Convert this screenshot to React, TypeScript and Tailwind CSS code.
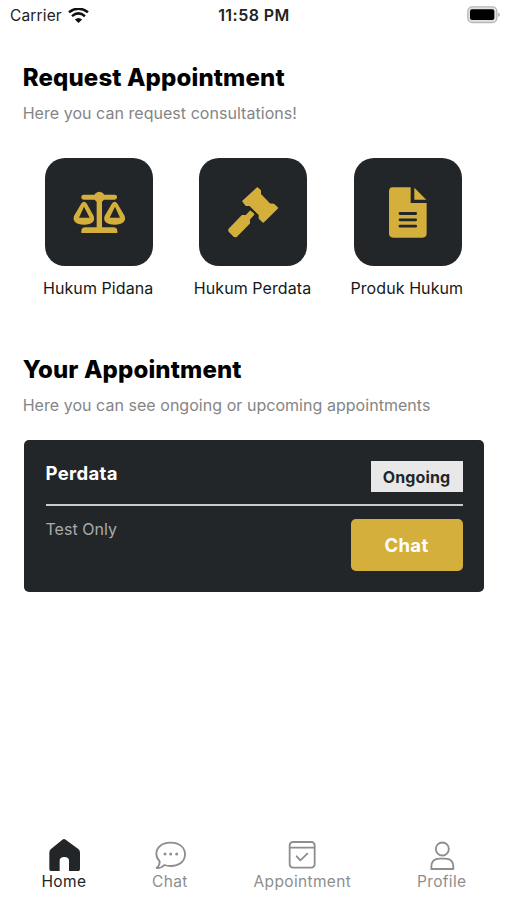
import type { ReactNode } from "react";

function WifiIcon() {
  return (
    <svg className="ml-[6px] h-[16px] w-[21px]" viewBox="204 20 63 48" fill="none" stroke="#111" strokeWidth="7.5">
      <path d="M207 33 Q235 11 264 33" />
      <path d="M216 44.5 Q235 28 255 44.5" />
      <path d="M235.500 65 L224.500 54.500 Q235.500 45.500 246.500 54.500 Z" fill="#111" stroke="none" />
    </svg>
  );
}

function BatteryIcon() {
  return (
    <svg className="h-[18px] w-[34px]" viewBox="636 16 102 54">
      <rect x="641.500" y="18.500" width="87" height="47" rx="13" fill="#e2e2e2" stroke="#b8b8b8" strokeWidth="4" />
      <rect x="648" y="26" width="73" height="32" rx="6" fill="#000" />
      <path d="M733 36 Q737 38 737 42 Q737 46 733 48 Z" fill="#999" />
    </svg>
  );
}

function ScalesIcon() {
  return (
    <svg className="size-full" viewBox="47 25 324 324" fill="#d4af3c">
      <circle cx="210" cy="142" r="16" />
      <rect x="156" y="135" width="107" height="15" rx="7" />
      <rect x="202" y="140" width="16" height="98" />
      <path d="M156 250 V245 Q156 233 168 233 H252 Q264 233 264 245 V250 Z" />
      <path fillRule="evenodd" d="M155 163 Q164 149 173 163 L193 199 Q201 224 164 225 Q127 224 134 199 Z M164 171 L149 204 H181 Z" />
      <path fillRule="evenodd" d="M247 163 Q256 149 265 163 L286 199 Q293 224 256 225 Q218 224 226 199 Z M257 171 L241 204 H272 Z" />
    </svg>
  );
}

function GavelIcon() {
  return (
    <svg className="size-full" viewBox="60 25 324 324" fill="#d4af3c" stroke="#d4af3c" strokeLinejoin="round" strokeWidth="6">
      <path d="M193 155 L235 116 L243 123 L243 134 L272 164 L284 165 L294 175 L253 216 L242 206 L242 195 L213 166 L202 166 Z" />
      <path d="M151 239 L190 199 L202 199 L214 186 L223 194 L210 208 L210 220 L171 260 L166 259 L151 244 Z" />
    </svg>
  );
}

function DocumentIcon() {
  return (
    <svg className="size-full" viewBox="72 25 324 324" fill="#d4af3c">
      <path d="M188 113 H242 V160 H290 V251 Q290 264 277 264 H190 Q177 264 177 251 V126 Q177 113 188 113 Z" />
      <path d="M253 114 L289 150 H253 Z" />
      <path d="M210 191.500 H257 M210 210.500 H257 M210 229.500 H257" stroke="#222629" strokeWidth="8.500" strokeLinecap="round" />
    </svg>
  );
}

function Service({ label, children }: { label: string; children: ReactNode }) {
  return (
    <button className="flex flex-col items-center">
      <span className="block size-[108px] overflow-hidden rounded-[20px] bg-[#222629]">{children}</span>
      <span className="mt-[10px] whitespace-nowrap pr-[2px] text-[16px] leading-6 tracking-[0.08px] text-[#171717]">{label}</span>
    </button>
  );
}

function SectionTitle({ title, text }: { title: string; text: string }) {
  return (
    <header className="pl-[22.7px]">
      <h2 className="text-[24px] font-extrabold leading-[30px] tracking-[0.14px] text-black">{title}</h2>
      <p className="mt-[8px] text-[16px] leading-6 tracking-[0.04px] text-[#858585]">{text}</p>
    </header>
  );
}

function NavItem({ label, active = false, children }: { label: string; active?: boolean; children: ReactNode }) {
  return (
    <button className={active ? "flex flex-col items-center text-[#222629]" : "flex flex-col items-center text-[#8e8e8e]"}>
      {children}
      <span className="mt-px text-[15.5px] leading-[20px] tracking-[0.35px]">{label}</span>
    </button>
  );
}

export default function App() {
  return (
    <div className="flex h-[900px] w-[507px] flex-col overflow-hidden bg-white font-['Inter',sans-serif]">
      <div className="grid h-[30px] grid-cols-3 items-center pl-[10px] pr-[7px] text-[15.5px] text-[#222]">
        <div className="flex items-center pt-px">
          <span className="tracking-[0.15px]">Carrier</span>
          <WifiIcon />
        </div>
        <span className="pr-[2px] text-center text-[16px] font-semibold tracking-[0.45px]">11:58 PM</span>
        <div className="flex justify-end"><BatteryIcon /></div>
      </div>

      <main className="flex-1">
        <div className="pt-[33px]">
          <SectionTitle title="Request Appointment" text="Here you can request consultations!" />
        </div>
        <div className="ml-[22px] mr-[22px] mt-[33.3px] grid grid-cols-3">
          <Service label="Hukum Pidana"><ScalesIcon /></Service>
          <Service label="Hukum Perdata"><GavelIcon /></Service>
          <Service label="Produk Hukum"><DocumentIcon /></Service>
        </div>
        <div className="mt-[54.7px]">
          <SectionTitle title="Your Appointment" text="Here you can see ongoing or upcoming appointments" />
        </div>
        <article className="ml-[24px] mt-[23px] h-[152px] w-[460px] rounded-[5px] bg-[#222629] px-[21.5px] pt-[21px]">
          <div className="flex h-[45px] items-start justify-between border-b-2 border-[#c8cacb]">
            <h3 className="text-[18.5px] font-bold leading-6 tracking-[0.35px] text-white">Perdata</h3>
            <span className="flex h-[31px] w-[92px] items-center justify-center bg-[#e8e8e8] pt-px text-[16px] font-bold tracking-[0.15px] text-[#222629]">Ongoing</span>
          </div>
          <div className="flex items-start justify-between pt-[13px]">
            <p className="mt-[-2px] text-[16px] leading-6 tracking-[0.04px] text-[#a9abac]">Test Only</p>
            <button className="h-[52px] w-[112px] rounded-[5px] bg-[#d4af3c] pt-px text-[18.5px] font-bold tracking-[0.35px] text-white">Chat</button>
          </div>
        </article>
      </main>

      <nav className="flex h-[62px] items-start justify-between pl-[41.5px] pr-[40.5px]">
        <NavItem label="Home" active>
          <svg className="h-[33px] w-[32px]" viewBox="85 38 96 99" fill="currentColor">
            <path d="M128 43 Q133 39 138 43 L176 71 Q181 75 181 82 V130 Q181 138 173 138 H148 V106 Q148 95 134 95 Q120 95 120 106 V138 H97 Q89 138 89 130 V82 Q89 75 94 71 Z" />
          </svg>
        </NavItem>
        <NavItem label="Chat">
          <svg className="h-[33px] w-[34px]" viewBox="70 38 102 99" fill="none" stroke="currentColor" strokeWidth="5.500" strokeLinejoin="round">
            <path d="M90 108 Q80 98 80 85 C80 65 98 52 123 52 C149 52 166 66 166 87 C166 108 149 122 123 122 Q112 122 104 119 Q95 129 81 128 Q91 119 90 108 Z" />
            <g fill="currentColor" stroke="none"><circle cx="106" cy="86" r="4.5" /><circle cx="123" cy="86" r="4.5" /><circle cx="141" cy="86" r="4.5" /></g>
          </svg>
        </NavItem>
        <NavItem label="Appointment">
          <svg className="h-[33px] w-[30px]" viewBox="142 38 90 99" fill="none" stroke="currentColor" strokeWidth="5.5" strokeLinejoin="round" strokeLinecap="round">
            <rect x="150" y="50" width="75" height="77" rx="10" />
            <path d="M151 67 H224 M171 93 L182 105 L203 85" />
          </svg>
        </NavItem>
        <NavItem label="Profile">
          <svg className="h-[33px] w-[30px]" viewBox="81 38 90 99" fill="none" stroke="currentColor" strokeWidth="5.5" strokeLinejoin="round">
            <circle cx="127" cy="71" r="19.500" />
            <path d="M94 131 V125 Q94 100 119 100 H135 Q160 100 160 125 V131 Z" />
          </svg>
        </NavItem>
      </nav>
    </div>
  );
}
